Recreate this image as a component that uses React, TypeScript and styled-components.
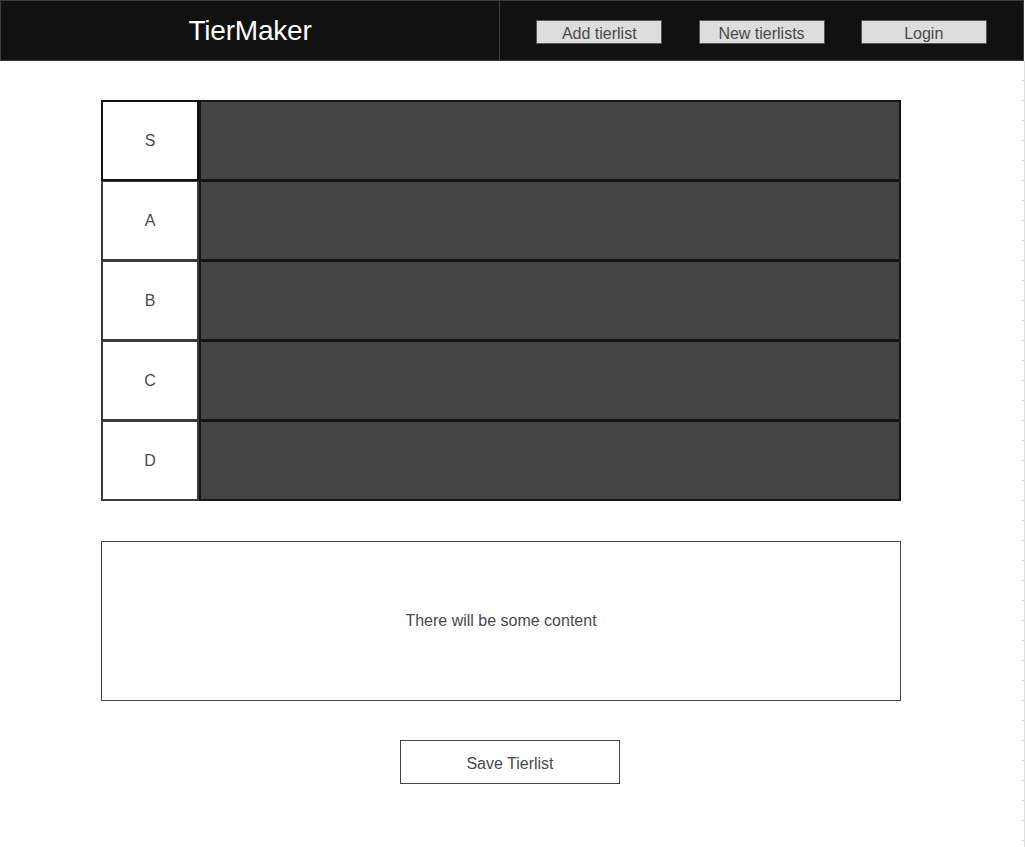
import React from "react";
import styled, { createGlobalStyle } from "styled-components";

const GlobalStyle = createGlobalStyle`
  html, body {
    margin: 0;
    padding: 0;
    background: #ffffff;
    font-family: "Liberation Sans", Arial, sans-serif;
  }
  * { box-sizing: border-box; }
`;

const Page = styled.div`
  display: flex;
  flex-direction: column;
  min-height: 847px;
`;

const Header = styled.header`
  display: flex;
  width: 1024px;
  height: 61px;
  background: #111111;
  border: 1px solid #3c3c3c;
`;

const Brand = styled.div`
  width: 499px;
  display: flex;
  align-items: center;
  justify-content: center;
  border-right: 1px solid #3c3c3c;
  color: #ffffff;
  font-size: 28px;
  letter-spacing: -0.2px;
  padding-top: 1px;
`;

const Nav = styled.nav`
  flex: 1;
  display: flex;
  justify-content: space-evenly;
  align-items: flex-start;
  padding-top: 19px;
`;

const NavButton = styled.button`
  width: 126px;
  height: 24px;
  padding: 3px 0 0;
  background: #dddddd;
  border: 1px solid #555555;
  color: #4a4a4a;
  font-family: "Liberation Sans", Arial, sans-serif;
  font-size: 16px;
  line-height: 19px;
`;

const Body = styled.div`
  flex: 1;
  display: flex;
`;

const Main = styled.main`
  flex: 1;
  display: flex;
  flex-direction: column;
  padding: 39px 0 40px 101px;
`;

const Ruler = styled.div`
  width: 3px;
  border-right: 1px solid #dcdcdc;
  background: repeating-linear-gradient(
    to bottom,
    transparent 0px,
    transparent 19px,
    #dcdcdc 19px,
    #dcdcdc 20px
  );
`;

const Table = styled.div`
  width: 800px;
  display: flex;
  flex-direction: column;
`;

const Row = styled.div<{ $first?: boolean }>`
  display: flex;
  height: ${(p) => (p.$first ? "81px" : "80px")};
`;

const Label = styled.div<{ $active?: boolean; $first?: boolean }>`
  width: 98px;
  display: flex;
  align-items: center;
  justify-content: center;
  background: #ffffff;
  border: 2px solid ${(p) => (p.$active ? "#111111" : "#3c3c3c")};
  border-top-width: ${(p) => (p.$first ? "2px" : "1px")};
  color: #4a4a4a;
  font-size: 16px;
`;

const Items = styled.div<{ $first?: boolean }>`
  flex: 1;
  background: #444444;
  border: 2px solid #161616;
  border-top-width: ${(p) => (p.$first ? "2px" : "1px")};
`;

const ContentBox = styled.section`
  width: 800px;
  height: 160px;
  margin-top: 40px;
  border: 1px solid #444444;
  display: flex;
  align-items: center;
  justify-content: center;
  color: #4a4a4a;
  font-size: 16px;
`;

const SaveRow = styled.div`
  display: flex;
  margin-top: 39px;
  padding-left: 299px;
`;

const SaveButton = styled.button`
  width: 220px;
  height: 44px;
  background: #ffffff;
  border: 1px solid #444444;
  color: #4a4a4a;
  font-family: "Liberation Sans", Arial, sans-serif;
  font-size: 16px;
  padding: 4px 0 0;
`;

const tiers = ["S", "A", "B", "C", "D"];

export default function App() {
  return (
    <>
      <GlobalStyle />
      <Page>
        <Header>
          <Brand>TierMaker</Brand>
          <Nav>
            <NavButton>Add tierlist</NavButton>
            <NavButton>New tierlists</NavButton>
            <NavButton>Login</NavButton>
          </Nav>
        </Header>
        <Body>
          <Main>
            <Table>
              {tiers.map((t, i) => (
                <Row key={t} $first={i === 0}>
                  <Label $active={i === 0} $first={i === 0}>
                    {t}
                  </Label>
                  <Items $first={i === 0} />
                </Row>
              ))}
            </Table>
            <ContentBox>There will be some content</ContentBox>
            <SaveRow>
              <SaveButton>Save Tierlist</SaveButton>
            </SaveRow>
          </Main>
          <Ruler />
        </Body>
      </Page>
    </>
  );
}
